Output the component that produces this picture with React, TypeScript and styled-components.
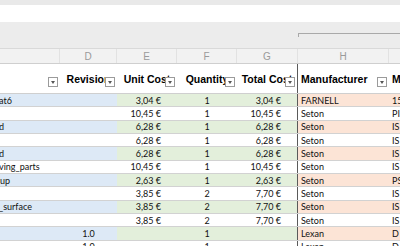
import React from 'react';
import styled, { createGlobalStyle } from 'styled-components';

const COLS = '60px 57px 60px 60px 61px 91px 71px';

const Global = createGlobalStyle`
  html, body { margin: 0; padding: 0; background: #ffffff; overflow: hidden; }
  * { box-sizing: border-box; }
`;

const Screen = styled.div`
  width: 400px;
  height: 246px;
  overflow: hidden;
  display: flex;
  flex-direction: column;
  background: #ffffff;
`;

const ToolbarEdge = styled.div`
  flex: none;
  height: 5px;
  background: #e9e9e9;
`;

const FormulaBar = styled.div`
  flex: none;
  height: 17px;
  background: #ffffff;
`;

const OutlineBar = styled.div`
  flex: none;
  height: 27px;
  display: grid;
  grid-template-columns: ${COLS};
  background: #ececec;
  border-bottom: 1px solid #d9d9d9;
`;

const OutlineBracket = styled.div`
  grid-column: 6 / -1;
  margin-top: 11px;
  height: 4px;
  border-top: 1px solid #a9a9a9;
  border-left: 1px solid #a9a9a9;
`;

const ColumnLetters = styled.div`
  flex: none;
  height: 15px;
  display: grid;
  grid-template-columns: ${COLS};
  background: #f2f2f2;
  border-bottom: 1px solid #cfcfcf;
`;

const Letter = styled.div`
  display: flex;
  align-items: center;
  justify-content: center;
  border-right: 1px solid #e2e2e2;
  font-family: 'Liberation Sans', Arial, sans-serif;
  font-size: 10px;
  color: #9a9a9a;
`;

const HeaderRow = styled.div`
  flex: none;
  height: 30px;
  display: grid;
  grid-template-columns: ${COLS};
  border-bottom: 1px solid #cfcfcf;
`;

const HeadCell = styled.div<{ $align?: 'left' | 'center'; $divider?: boolean }>`
  position: relative;
  display: flex;
  align-items: center;
  justify-content: ${(p) => (p.$align === 'left' ? 'flex-start' : 'center')};
  padding: 0 ${(p) => (p.$align === 'left' ? '3px' : '0')};
  overflow: hidden;
  white-space: nowrap;
  font-family: 'Liberation Sans', Arial, sans-serif;
  font-weight: bold;
  font-size: 10.5px;
  color: #000000;
  border-right: ${(p) => (p.$divider ? '1px solid #5a5a5a' : 'none')};
`;

const FilterButton = styled.span`
  position: absolute;
  right: 2px;
  bottom: 6px;
  width: 10px;
  height: 10px;
  background: #ffffff;
  border: 1px solid #9b9b9b;
  display: flex;
  align-items: center;
  justify-content: center;
  &::after {
    content: '';
    width: 0;
    height: 0;
    border-left: 2.5px solid transparent;
    border-right: 2.5px solid transparent;
    border-top: 3px solid #555555;
  }
`;

type Tone = 'blue' | 'green' | 'peach' | 'none';

const tones: Record<Tone, string> = {
  blue: '#dde9f6',
  green: '#e3efdb',
  peach: '#fce4d6',
  none: '#ffffff',
};

const DataRow = styled.div`
  flex: none;
  height: 13.34px;
  display: grid;
  grid-template-columns: ${COLS};
  border-bottom: 1px solid #d2d2d2;
`;

const Cell = styled.div<{
  $tone: Tone;
  $align: 'left' | 'center' | 'right';
  $divider?: boolean;
}>`
  display: flex;
  align-items: center;
  justify-content: ${(p) =>
    p.$align === 'left' ? 'flex-start' : p.$align === 'center' ? 'center' : 'flex-end'};
  padding: ${(p) => (p.$align === 'right' ? '0 16px 0 0' : p.$align === 'left' ? '0 0 0 3px' : '0')};
  background: ${(p) => tones[p.$tone]};
  border-right: ${(p) => (p.$divider ? '1px solid #5a5a5a' : 'none')};
  overflow: visible;
  white-space: nowrap;
  font-family: Lato, 'Open Sans', sans-serif;
  font-size: 9px;
  color: #111111;
  line-height: 1;
  min-width: 0;
`;

const NameText = styled.span<{ $shift: number }>`
  margin-left: ${(p) => p.$shift}px;
`;

type Item = {
  name: string;
  shift: number;
  rev: string;
  unit: string;
  qty: string;
  total: string;
  maker: string;
  part: string;
};

const items: Item[] = [
  { name: 'at6', shift: -4, rev: '', unit: '3,04 €', qty: '1', total: '3,04 €', maker: 'FARNELL', part: '15' },
  { name: '', shift: 0, rev: '', unit: '10,45 €', qty: '1', total: '10,45 €', maker: 'Seton', part: 'PI' },
  { name: 'd', shift: -4, rev: '', unit: '6,28 €', qty: '1', total: '6,28 €', maker: 'Seton', part: 'IS' },
  { name: '', shift: 0, rev: '', unit: '6,28 €', qty: '1', total: '6,28 €', maker: 'Seton', part: 'IS' },
  { name: 'd', shift: -4, rev: '', unit: '6,28 €', qty: '1', total: '6,28 €', maker: 'Seton', part: 'IS' },
  { name: 'ving_parts', shift: -4, rev: '', unit: '10,45 €', qty: '1', total: '10,45 €', maker: 'Seton', part: 'IS' },
  { name: 'up', shift: -3, rev: '', unit: '2,63 €', qty: '1', total: '2,63 €', maker: 'Seton', part: 'PS' },
  { name: '', shift: 0, rev: '', unit: '3,85 €', qty: '2', total: '7,70 €', maker: 'Seton', part: 'IS' },
  { name: '_surface', shift: -4, rev: '', unit: '3,85 €', qty: '2', total: '7,70 €', maker: 'Seton', part: 'IS' },
  { name: '', shift: 0, rev: '', unit: '3,85 €', qty: '2', total: '7,70 €', maker: 'Seton', part: 'IS' },
  { name: '', shift: 0, rev: '1.0', unit: '', qty: '1', total: '', maker: 'Lexan', part: 'D' },
  { name: '', shift: 0, rev: '1.0', unit: '', qty: '1', total: '', maker: 'Lexan', part: 'D' },
];

const headers = [
  { label: '', align: 'center' as const },
  { label: 'Revision', align: 'center' as const },
  { label: 'Unit Cost', align: 'center' as const },
  { label: 'Quantity', align: 'center' as const },
  { label: 'Total Cost', align: 'center' as const, divider: true },
  { label: 'Manufacturer', align: 'left' as const },
  { label: 'Manufacturer Part', align: 'left' as const },
];

export default function App() {
  return (
    <>
      <Global />
      <Screen>
        <ToolbarEdge />
        <FormulaBar />
        <OutlineBar>
          <OutlineBracket />
        </OutlineBar>
        <ColumnLetters>
          {['', 'D', 'E', 'F', 'G', 'H', 'I'].map((l, i) => (
            <Letter key={i}>{l}</Letter>
          ))}
        </ColumnLetters>
        <HeaderRow>
          {headers.map((h, i) => (
            <HeadCell key={i} $align={h.align} $divider={h.divider}>
              {h.label}
              <FilterButton />
            </HeadCell>
          ))}
        </HeaderRow>
        {items.map((it, i) => {
          const odd = i % 2 === 0;
          const b: Tone = odd ? 'blue' : 'none';
          const g: Tone = odd ? 'green' : 'none';
          const p: Tone = odd ? 'peach' : 'none';
          return (
            <DataRow key={i}>
              <Cell $tone={b} $align="left">
                <NameText $shift={it.shift}>{it.name}</NameText>
              </Cell>
              <Cell $tone={b} $align="center">{it.rev}</Cell>
              <Cell $tone={g} $align="right">{it.unit}</Cell>
              <Cell $tone={g} $align="center">{it.qty}</Cell>
              <Cell $tone={g} $align="right" $divider>{it.total}</Cell>
              <Cell $tone={p} $align="left">{it.maker}</Cell>
              <Cell $tone={p} $align="left">{it.part}</Cell>
            </DataRow>
          );
        })}
      </Screen>
    </>
  );
}
